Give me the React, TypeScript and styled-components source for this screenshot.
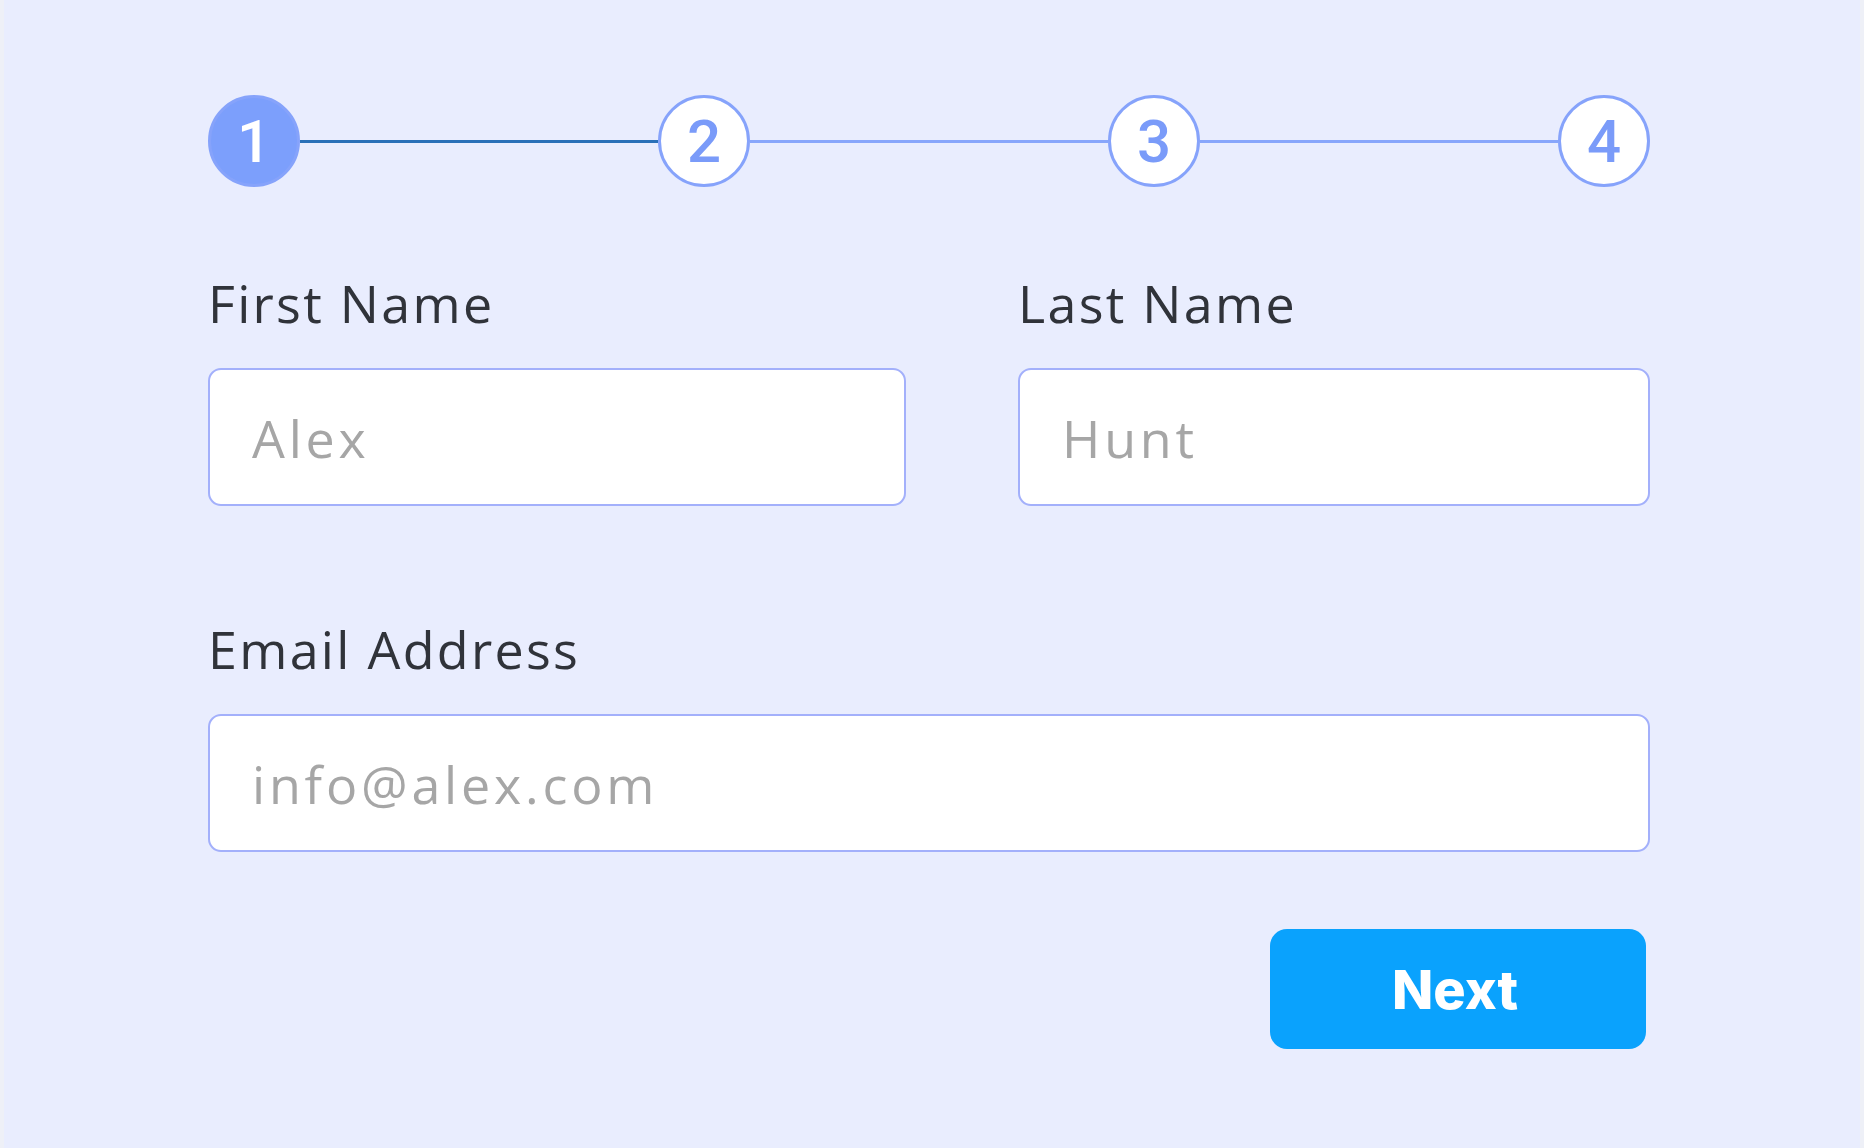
import styled, { createGlobalStyle } from "styled-components";

const GlobalStyle = createGlobalStyle`
  html, body {
    margin: 0;
    padding: 0;
    background: #e9edfe;
  }
  * {
    box-sizing: border-box;
  }
`;

const Page = styled.div`
  width: 1864px;
  height: 1148px;
  background: #e9edfe;
  border-left: 4px solid #eef0f7;
  border-right: 4px solid #eef0f7;
  padding: 95px 0 0 204px;
  font-family: "Open Sans", "Liberation Sans", sans-serif;
`;

const Form = styled.div`
  width: 1442px;
  display: flex;
  flex-direction: column;
`;

const Stepper = styled.div`
  display: flex;
  align-items: center;
  height: 92px;
`;

interface StepProps {
  active?: boolean;
}

const Step = styled.div<StepProps>`
  width: 92px;
  height: 92px;
  flex: none;
  border-radius: 50%;
  display: flex;
  align-items: center;
  justify-content: center;
  border: 3px solid #86a3fb;
  background: ${({ active }) => (active ? "#7c9ffc" : "#ffffff")};
  color: ${({ active }) => (active ? "#ffffff" : "#7a9bf9")};
  font: 500 60px "Roboto", "DejaVu Sans", sans-serif;
  line-height: 1;
  padding-top: 2px;
`;

interface LineProps {
  done?: boolean;
}

const Line = styled.div<LineProps>`
  flex: 1;
  height: 3px;
  background: ${({ done }) => (done ? "#2a70b8" : "#88a6fb")};
`;

const Row = styled.div`
  display: flex;
  gap: 112px;
  margin-top: 85px;
`;

interface FieldProps {
  width?: number;
}

const Field = styled.div<FieldProps>`
  display: flex;
  flex-direction: column;
  gap: 34px;
  width: ${({ width }) => (width ? `${width}px` : "100%")};
`;

const Label = styled.label`
  font: 400 52px "Open Sans", sans-serif;
  line-height: 62px;
  height: 62px;
  color: #30333a;
  letter-spacing: 2.3px;
`;

const Input = styled.input`
  height: 138px;
  width: 100%;
  border: 2px solid #a3b0fb;
  border-radius: 13px;
  background: #ffffff;
  padding: 0 0 0 42px;
  font: 400 52px "Open Sans", sans-serif;
  letter-spacing: 3.8px;
  color: #30333a;
  outline: none;

  &::placeholder {
    color: #a6a6a6;
    opacity: 1;
  }
`;

const EmailRow = styled.div`
  margin-top: 112px;
`;

const Footer = styled.div`
  display: flex;
  justify-content: flex-end;
  margin-top: 77px;
  padding-right: 4px;
`;

const NextButton = styled.button`
  width: 376px;
  height: 120px;
  border: none;
  border-radius: 17px;
  background: #0aa2fd;
  color: #ffffff;
  font: 800 54px "Inter", "Liberation Sans", sans-serif;
  cursor: pointer;
  padding: 0 6px 0 0;
`;

const steps = [1, 2, 3, 4];

const App = (): React.ReactElement => (
  <>
    <GlobalStyle />
    <Page>
      <Form>
        <Stepper>
          {steps.map((n, i) => [
            i > 0 ? <Line key={`l${n}`} done={i === 1} /> : null,
            <Step key={`s${n}`} active={n === 1}>
              {n}
            </Step>,
          ])}
        </Stepper>

        <Row>
          <Field width={698}>
            <Label>First Name</Label>
            <Input placeholder="Alex" />
          </Field>
          <Field width={632}>
            <Label>Last Name</Label>
            <Input placeholder="Hunt" />
          </Field>
        </Row>

        <EmailRow>
          <Field>
            <Label>Email Address</Label>
            <Input placeholder="info@alex.com" />
          </Field>
        </EmailRow>

        <Footer>
          <NextButton>Next</NextButton>
        </Footer>
      </Form>
    </Page>
  </>
);

export default App;
